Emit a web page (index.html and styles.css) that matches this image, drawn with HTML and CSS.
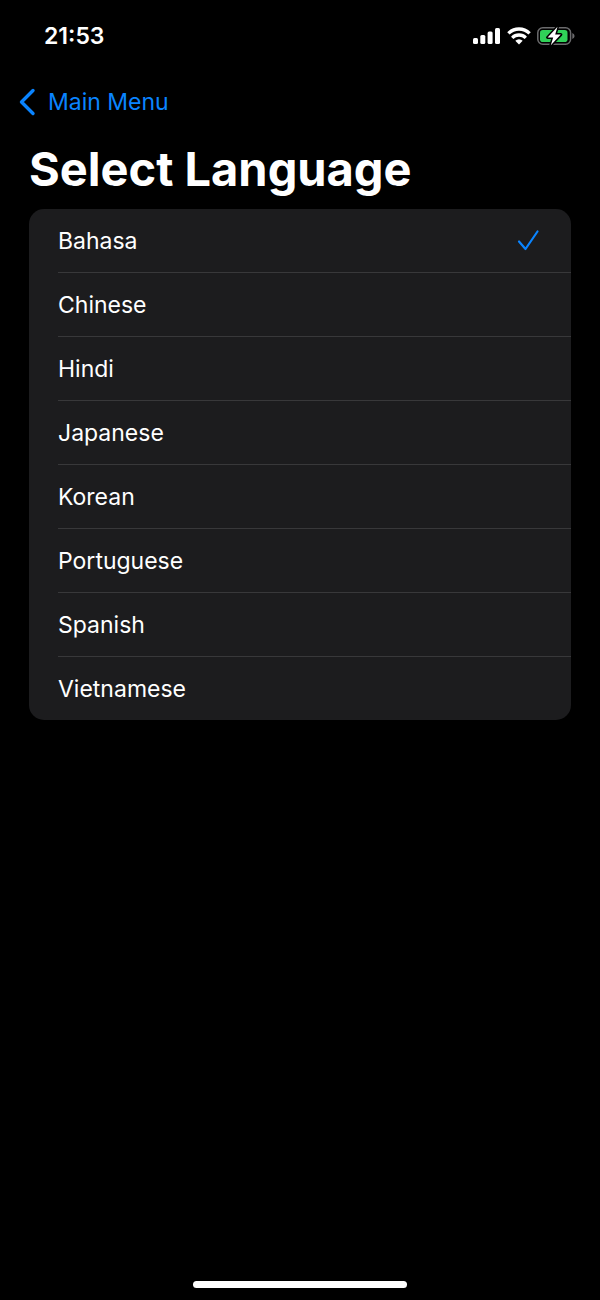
FILE: index.html
```html
<!DOCTYPE html>
<html lang="en">
<head>
    <meta charset="UTF-8">
    <meta name="viewport" content="width=device-width, initial-scale=1.0">
    <title>Select Language</title>
    <link rel="stylesheet" href="styles.css">
</head>
<body>
    <svg width="0" height="0" class="sprite" aria-hidden="true">
        <symbol id="check" viewBox="0 0 24 24">
            <path d="M3 12.5 L9.5 20 L21.5 2.5" fill="none" stroke="currentColor" stroke-width="2.2" stroke-linecap="round" stroke-linejoin="round"/>
        </symbol>
    </svg>

    <div class="status-bar">
        <span class="time">21:53</span>
        <div class="status-icons">
            <svg width="28" height="18" viewBox="0 0 28 18" fill="#fff" aria-label="Signal">
                <rect x="0" y="11" width="5" height="6" rx="1.5"/>
                <rect x="7.3" y="8" width="5" height="9" rx="1.5"/>
                <rect x="14.6" y="4.5" width="5" height="12.5" rx="1.5"/>
                <rect x="22" y="1" width="5" height="16" rx="1.5"/>
            </svg>
            <svg width="24" height="18" viewBox="0 0 24 18" aria-label="Wi-Fi">
                <g fill="none" stroke="#fff" stroke-width="3.3">
                    <path d="M1.4 6.4 A15 15 0 0 1 22.6 6.4"/>
                    <path d="M5.2 10.8 A9.6 9.6 0 0 1 18.8 10.8"/>
                </g>
                <path d="M12 17.4 L8.3 13.7 A5.3 5.3 0 0 1 15.7 13.7 Z" fill="#fff"/>
            </svg>
            <svg width="38" height="20" viewBox="0 0 38 20" aria-label="Battery charging">
                <rect x="0.8" y="1.8" width="32.8" height="16.4" rx="5" fill="none" stroke="#6b6b6d" stroke-width="1.5"/>
                <rect x="3" y="4" width="27.5" height="12" rx="2.8" fill="#30d158"/>
                <path d="M35.3 7 Q37.6 8 37.6 10 Q37.6 12 35.3 13 Z" fill="#6b6b6d"/>
                <path d="M20.5 0.8 L10.6 11.4 H16.2 L13.8 19.2 L23.8 8.6 H18.2 Z" fill="#fff" stroke="#000" stroke-width="3" stroke-linejoin="round" paint-order="stroke"/>
            </svg>
        </div>
    </div>

    <nav class="nav-bar">
        <a href="#" class="back">
            <svg width="17" height="28" viewBox="0 0 17 28" aria-hidden="true">
                <path d="M14 2.5 L2.5 14 L14 25.5" fill="none" stroke="currentColor" stroke-width="3.4" stroke-linecap="round" stroke-linejoin="round"/>
            </svg>
            Main Menu
        </a>
    </nav>

    <main>
        <h1>Select Language</h1>
        <div class="list" role="radiogroup" aria-label="Select Language">
            <label class="row"><input type="radio" name="language" checked><span class="cell">Bahasa <svg class="check"><use href="#check"/></svg></span></label>
            <label class="row"><input type="radio" name="language"><span class="cell">Chinese <svg class="check"><use href="#check"/></svg></span></label>
            <label class="row"><input type="radio" name="language"><span class="cell">Hindi <svg class="check"><use href="#check"/></svg></span></label>
            <label class="row"><input type="radio" name="language"><span class="cell">Japanese <svg class="check"><use href="#check"/></svg></span></label>
            <label class="row"><input type="radio" name="language"><span class="cell">Korean <svg class="check"><use href="#check"/></svg></span></label>
            <label class="row"><input type="radio" name="language"><span class="cell">Portuguese <svg class="check"><use href="#check"/></svg></span></label>
            <label class="row"><input type="radio" name="language"><span class="cell">Spanish <svg class="check"><use href="#check"/></svg></span></label>
            <label class="row"><input type="radio" name="language"><span class="cell">Vietnamese <svg class="check"><use href="#check"/></svg></span></label>
        </div>
    </main>

    <div class="home-indicator"></div>
</body>
</html>
```

FILE: styles.css
```css
* {
    box-sizing: border-box;
}
body {
    display: flex;
    flex-direction: column;
    min-height: 100vh;
    margin: 0;
    background-color: #000;
    color: #fff;
    font-family: Inter, "Liberation Sans", sans-serif;
    font-size: 23px;
    line-height: 32px;
}
.sprite {
    position: absolute;
}
.status-bar {
    display: flex;
    align-items: center;
    justify-content: space-between;
    height: 72px;
    padding: 0 25px 0 44px;
}
.time {
    font-weight: 600;
}
.status-icons {
    display: flex;
    align-items: center;
    gap: 6px;
}
.nav-bar {
    display: flex;
    padding: 14px 19px;
}
.back {
    display: flex;
    align-items: center;
    gap: 12px;
    color: #0a84ff;
    text-decoration: none;
}
main {
    flex: 1;
    padding: 0 29px;
}
h1 {
    margin: 0 0 3px;
    font-size: 47px;
    font-weight: 700;
    line-height: 74px;
}
.list {
    border-radius: 15px;
    background-color: #1c1c1e;
    overflow: hidden;
}
.row {
    display: block;
    padding-left: 29px;
    cursor: pointer;
}
.row input {
    position: absolute;
    margin: 0;
    opacity: 0;
}
.cell {
    display: flex;
    align-items: center;
    justify-content: space-between;
    height: 63px;
    padding-right: 31px;
}
.row + .row .cell {
    height: 64px;
    border-top: 1px solid #38383a;
}
.check {
    width: 24px;
    height: 24px;
    color: #0a84ff;
    visibility: hidden;
}
.row input:checked + .cell .check {
    visibility: visible;
}
.home-indicator {
    width: 214px;
    height: 7px;
    margin: 0 auto 12px;
    border-radius: 4px;
    background-color: #fff;
}
```
